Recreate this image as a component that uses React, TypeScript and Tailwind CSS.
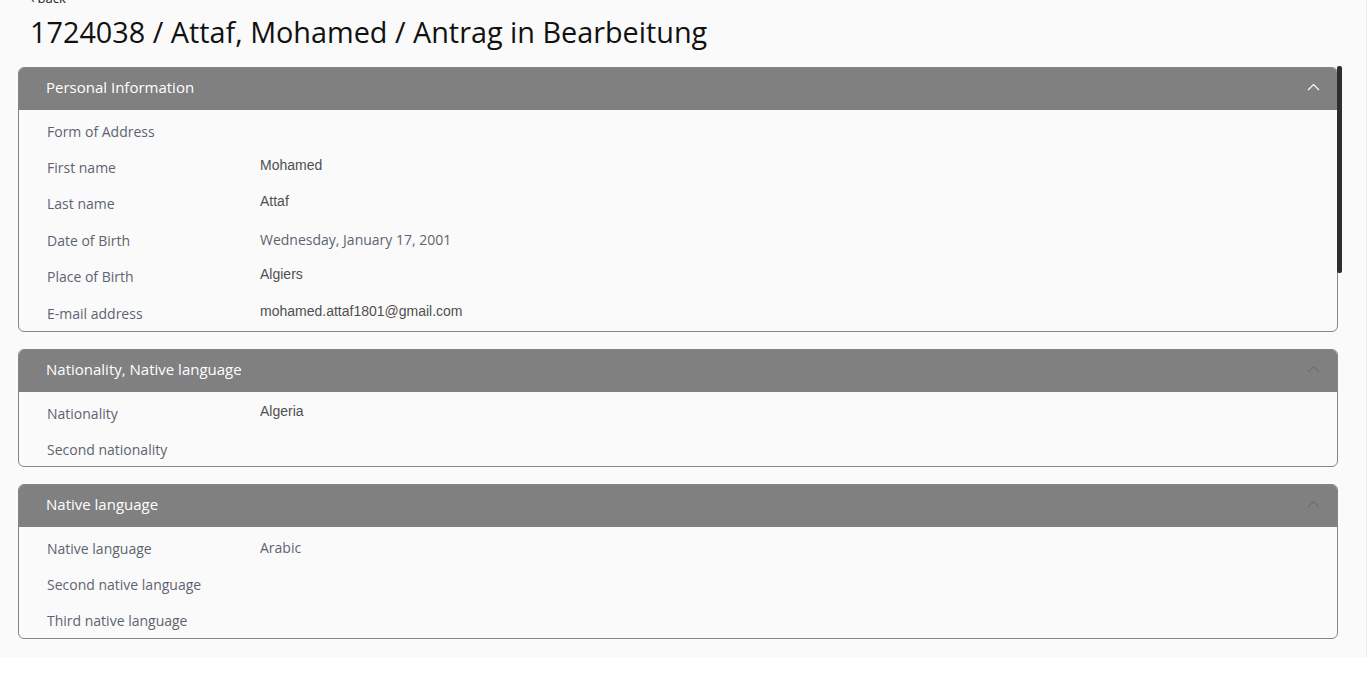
import React from "react";

type Row = { label: string; value?: string; openSans?: boolean };

const Chevron = ({ active }: { active: boolean }) => (
  <svg width="13" height="8" viewBox="0 0 13 8" className="block relative -top-[2px]">
    <path
      d="M1 7 L6.5 1.5 L12 7"
      fill="none"
      stroke={active ? "#ffffff" : "#6e6e6e"}
      strokeWidth="1.1"
    />
  </svg>
);

const Panel = ({
  title,
  rows,
  active,
  rowClass,
  bodyClass,
}: {
  title: string;
  rows: Row[];
  active: boolean;
  rowClass: string;
  bodyClass: string;
}) => (
  <div className="border border-[#858585] rounded-[6px] overflow-hidden bg-[#fafafa]">
    <div className="h-[42px] bg-[#808080] flex items-center justify-between pl-[27px] pr-[17px]">
      <span className="relative -top-[2px] text-white text-[15px] font-['Open_Sans',sans-serif]">{title}</span>
      <Chevron active={active} />
    </div>
    <div className={bodyClass}>
      {rows.map((r) => (
        <div key={r.label} className={`${rowClass} flex items-center pl-[28px]`}>
          <div className="w-[213px] text-[14px] text-[#5d6470] font-['Open_Sans',sans-serif] relative top-[1px]">
            {r.label}
          </div>
          {r.value && (
            <div
              className={
                r.openSans
                  ? "text-[14px] text-[#5d6470] font-['Open_Sans',sans-serif]"
                  : "text-[14px] text-[#505050] font-['Liberation_Sans',Arial,sans-serif] relative -top-[1px]"
              }
            >
              {r.value}
            </div>
          )}
        </div>
      ))}
    </div>
  </div>
);

export default function App() {
  return (
    <div className="w-[1371px] h-[699px] bg-white overflow-hidden">
      <div className="relative flex flex-col w-[1367px] h-[657px] bg-[#fafafa] border-r border-[#ececec]">
        <div className="pl-[31px] -mt-[10px] h-[17px] flex items-center gap-[3px] text-[13px] text-[#222] font-['Open_Sans',sans-serif]">
          <span className="text-[12px]">‹</span>
          <span>back</span>
        </div>
        <h1 className="pl-[30px] mt-[5px] h-[40px] text-[28.8px] leading-[40px] text-[#111] font-['Open_Sans',sans-serif] font-normal whitespace-nowrap">
          1724038 / Attaf, Mohamed / Antrag in Bearbeitung
        </h1>
        <div className="ml-[18px] w-[1320px] mt-[15px] flex flex-col gap-[17px]">
          <Panel
            title="Personal Information"
            active
            rowClass="h-[36.4px]"
            bodyClass="pt-[2px] pb-[1px]"
            rows={[
              { label: "Form of Address" },
              { label: "First name", value: "Mohamed" },
              { label: "Last name", value: "Attaf" },
              { label: "Date of Birth", value: "Wednesday, January 17, 2001", openSans: true },
              { label: "Place of Birth", value: "Algiers" },
              { label: "E-mail address", value: "mohamed.attaf1801@gmail.com" },
            ]}
          />
          <Panel
            title="Nationality, Native language"
            active={false}
            rowClass="h-[36px]"
            bodyClass="pt-[2px]"
            rows={[
              { label: "Nationality", value: "Algeria" },
              { label: "Second nationality" },
            ]}
          />
          <Panel
            title="Native language"
            active={false}
            rowClass="h-[36px]"
            bodyClass="pt-[2px] pb-[1px]"
            rows={[
              { label: "Native language", value: "Arabic", openSans: true },
              { label: "Second native language" },
              { label: "Third native language" },
            ]}
          />
        </div>
        <div className="absolute left-[1337px] top-[66px] w-[5px] h-[207px] bg-[#2e2e2e] rounded-[2px]" />
      </div>
    </div>
  );
}
